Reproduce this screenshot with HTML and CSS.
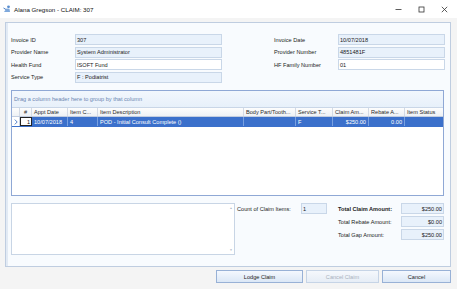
FILE: index.html
```html
<!DOCTYPE html>
<html>
<head>
<meta charset="utf-8">
<link rel="stylesheet" href="styles.css">
</head>
<body>
<div class="titlebar">
  <svg class="app-icon" viewBox="0 0 8 8"><circle cx="5.5" cy="1.8" r="1.4" fill="#5b8fd0"/><path d="M1 7 L3.5 3.5 L6.5 3.8 L7 7 Z" fill="#7fa9dc"/><path d="M0.5 3 L3 4.5" stroke="#4a7fc4" stroke-width="1"/></svg>
  <span class="title">Alana Gregson - CLAIM: 307</span>
  <div class="controls">
    <span class="ctl"><svg width="7" height="7" viewBox="0 0 7 7"><path d="M0.5 3.5 H6.5" stroke="#333" stroke-width="0.8"/></svg></span>
    <span class="ctl"><svg width="7" height="7" viewBox="0 0 7 7"><rect x="1" y="1" width="5" height="5" fill="none" stroke="#333" stroke-width="0.8"/></svg></span>
    <span class="ctl"><svg width="7" height="7" viewBox="0 0 7 7"><path d="M0.8 0.8 L6.2 6.2 M6.2 0.8 L0.8 6.2" stroke="#333" stroke-width="0.8"/></svg></span>
  </div>
</div>
<div class="main">
  <div class="panel">
    <div class="fields">
      <div class="col left">
        <div class="field"><span class="lbl">Invoice ID</span><div class="input ro">307</div></div>
        <div class="field"><span class="lbl">Provider Name</span><div class="input ro">System Administrator</div></div>
        <div class="field"><span class="lbl">Health Fund</span><div class="input">ISOFT Fund</div></div>
        <div class="field"><span class="lbl">Service Type</span><div class="input ro">F : Podiatrist</div></div>
      </div>
      <div class="col right">
        <div class="field"><span class="lbl">Invoice Date</span><div class="input ro">10/07/2018</div></div>
        <div class="field"><span class="lbl">Provider Number</span><div class="input ro">4851481F</div></div>
        <div class="field"><span class="lbl">HF Family Number</span><div class="input">01</div></div>
      </div>
    </div>
    <div class="grid">
      <div class="group-panel">Drag a column header here to group by that column</div>
      <div class="grow head">
        <div></div>
        <div class="c">#</div>
        <div>Appt Date</div>
        <div>Item C...</div>
        <div>Item Description</div>
        <div>Body Part/Tooth...</div>
        <div>Service T...</div>
        <div>Claim Am...</div>
        <div>Rebate A...</div>
        <div>Item Status</div>
      </div>
      <div class="grow data">
        <div class="ind"><svg width="4" height="6" viewBox="0 0 4 6"><path d="M0.8 0.6 L3.2 3 L0.8 5.4" fill="none" stroke="#3f74c8" stroke-width="0.9"/></svg></div>
        <div class="num">1</div>
        <div>10/07/2018</div>
        <div>4</div>
        <div>POD - Initial Consult Complete ()</div>
        <div></div>
        <div>F</div>
        <div class="r">$250.00</div>
        <div class="r">0.00</div>
        <div></div>
      </div>
    </div>
    <div class="bottom">
      <div class="memo">
        <div class="scroll"><span>&#9650;</span><span>&#9660;</span></div>
      </div>
      <div class="count">
        <span class="lbl">Count of Claim Items:</span>
        <div class="input ro">1</div>
      </div>
      <div class="totals">
        <div class="trow"><span class="lbl bold">Total Claim Amount:</span><div class="input ro r">$250.00</div></div>
        <div class="trow"><span class="lbl">Total Rebate Amount:</span><div class="input ro r">$0.00</div></div>
        <div class="trow"><span class="lbl">Total Gap Amount:</span><div class="input ro r">$250.00</div></div>
      </div>
    </div>
  </div>
  <div class="buttons">
    <div class="btn lodge">Lodge Claim</div>
    <div class="btn cc">Cancel Claim</div>
    <div class="btn cancel">Cancel</div>
  </div>
</div>
</body>
</html>
```

FILE: styles.css
```css
* { box-sizing: border-box; margin: 0; padding: 0; }
html, body { width: 457px; height: 289px; overflow: hidden; }
body {
  background: #f4f4f4;
  font-family: "Liberation Sans", Arial, sans-serif;
  font-size: 5.6px;
  color: #1b1b1b;
}
.titlebar {
  height: 18px;
  background: #ffffff;
  display: flex;
  align-items: center;
  padding-left: 3px;
}
.app-icon { width: 8px; height: 8px; flex: none; }
.title { margin-left: 3px; font-size: 6.2px; color: #111; }
.controls { margin-left: auto; display: flex; height: 100%; padding-right: 1px; }
.ctl { width: 23px; display: flex; align-items: center; justify-content: center; }

.main { padding: 4px 6px 0 5px; }
.panel {
  height: 245px;
  border: 1px solid #bfcde0;
  background: #f8fbfe;
  box-shadow: inset 2px 0 0 #e2eaf4;
  padding: 11px 6px 0 5px;
  display: flex;
  flex-direction: column;
}
.fields { display: flex; }
.col { display: flex; flex-direction: column; gap: 1.5px; flex: none; }
.col.left { width: 211px; }
.col.right { margin-left: 52px; width: 171px; }
.field { display: flex; align-items: center; height: 11px; }
.field .lbl { width: 64px; flex: none; }
.input {
  flex: 1;
  height: 11px;
  border: 1px solid #c9d7e8;
  background: #ffffff;
  padding: 0 1px;
  display: flex;
  align-items: center;
  white-space: nowrap;
}
.input.ro { background: #e8f1fb; }
.input.r { justify-content: flex-end; }

.grid {
  margin-top: 7.5px;
  height: 106px;
  border: 1px solid #8fa8d5;
  background: #ffffff;
  flex: none;
}
.group-panel {
  height: 17px;
  background: linear-gradient(#f2f7fd, #e7f0fa);
  color: #6b87b2;
  padding-left: 2px;
  display: flex;
  align-items: center;
  border-bottom: 1px solid #c9d6e7;
}
.grow {
  display: grid;
  grid-template-columns: 8px 12px 36px 30px 146px 52px 37px 36px 36px 38px;
}
.grow > div {
  border-right: 1px solid #d3dae5;
  padding: 0 2px;
  display: flex;
  align-items: center;
  overflow: hidden;
  white-space: nowrap;
}
.grow > div:last-child { border-right: none; }
.grow .c { justify-content: center; }
.grow .r { justify-content: flex-end; }
.grow.head {
  height: 9px;
  background: linear-gradient(#fdfdfd, #eef1f5);
  border-bottom: 1px solid #c2cde0;
  color: #2a2a2a;
}
.grow.data {
  height: 10px;
  background: #3b70cb;
  color: #ffffff;
  border-bottom: 1px solid #3b70cb;
}
.grow.data > div { border-right-color: #79a0e0; }
.grow.data .ind { background: #ffffff; padding: 0 0 0 2px; border-right-color: #c8d3e4; }
.grow.data .num {
  background: #ffffff;
  color: #111;
  justify-content: flex-end;
  border: 1px solid #222;
  padding: 0 1px;
}

.bottom { margin-top: 7px; display: flex; height: 52px; flex: none; }
.memo {
  width: 224px;
  flex: none;
  border: 1px solid #c8d5e5;
  background: #ffffff;
  display: flex;
  justify-content: flex-end;
}
.scroll {
  width: 6px;
  display: flex;
  flex-direction: column;
  justify-content: space-between;
  align-items: center;
  color: #a7b3c2;
  font-size: 3px;
  padding: 2px 0;
}
.count { display: flex; align-items: flex-start; margin-left: 2px; flex: none; }
.count .lbl { width: 64px; height: 11px; display: flex; align-items: center; }
.count .input { width: 26px; flex: none; }
.totals { margin-left: 11px; display: flex; flex-direction: column; gap: 2px; flex: none; }
.trow { display: flex; height: 11px; align-items: center; }
.trow .lbl { width: 63px; flex: none; }
.trow .input { width: 43px; flex: none; }
.bold { font-weight: bold; }

.buttons { display: flex; justify-content: flex-end; gap: 3px; margin-top: 3px; }
.btn {
  height: 13px;
  border: 1px solid #98b1d6;
  background: linear-gradient(#f4f8fe, #dbe7f6);
  display: flex;
  align-items: center;
  justify-content: center;
  color: #1b1b1b;
}
.btn.lodge { width: 87px; }
.btn.cc { width: 73px; color: #a9b1bd; border-color: #c6d4e6; background: linear-gradient(#f5f8fc, #e6edf6); }
.btn.cancel { width: 69px; }
```
